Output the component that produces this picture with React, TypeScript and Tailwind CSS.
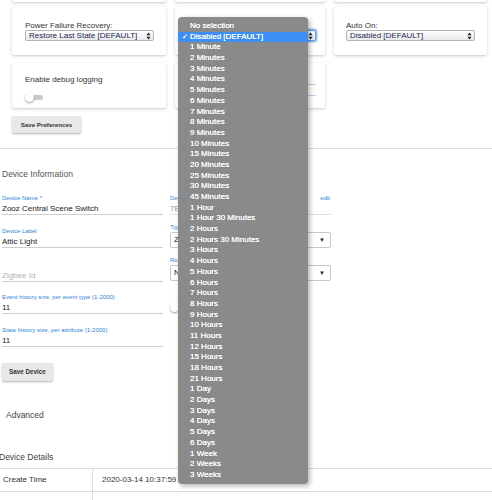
import React from 'react';

const options = [
  'No selection', 'Disabled [DEFAULT]', '1 Minute',
  '2 Minutes', '3 Minutes', '4 Minutes', '5 Minutes', '6 Minutes', '7 Minutes', '8 Minutes', '9 Minutes',
  '10 Minutes', '15 Minutes', '20 Minutes', '25 Minutes', '30 Minutes', '45 Minutes',
  '1 Hour', '1 Hour 30 Minutes', '2 Hours', '2 Hours 30 Minutes',
  '3 Hours', '4 Hours', '5 Hours', '6 Hours', '7 Hours', '8 Hours', '9 Hours', '10 Hours',
  '11 Hours', '12 Hours', '15 Hours', '18 Hours', '21 Hours',
  '1 Day', '2 Days', '3 Days', '4 Days', '5 Days', '6 Days',
  '1 Week', '2 Weeks', '3 Weeks',
];

const Card = ({ className = '', children }: { className?: string; children?: React.ReactNode }) => (
  <div className={`bg-white rounded-[2px] shadow-[0_1px_3px_rgba(0,0,0,0.22)] ${className}`}>{children}</div>
);

const UpDown = () => (
  <svg width="5" height="8" viewBox="0 0 5 8" className="shrink-0">
    <path d="M2.5 0.5 L4.6 3.2 H0.4 Z" fill="#222" />
    <path d="M2.5 7.5 L4.6 4.8 H0.4 Z" fill="#222" />
  </svg>
);

const MacSelect = ({ value, focused = false }: { value: string; focused?: boolean }) => (
  <div
    className={`flex items-center justify-between h-[11px] pl-[3px] pr-[2px] rounded-[2px] border bg-gradient-to-b from-white to-[#e9e9e9] ${
      focused ? 'border-[#5b9af0] shadow-[0_0_0_1.5px_rgba(80,150,240,0.6)]' : 'border-[#b4b4b4]'
    }`}
  >
    <span className="text-[8px] leading-[9px] text-[#1b2552] whitespace-nowrap">{value}</span>
    <UpDown />
  </div>
);

const Toggle = () => (
  <div className="relative w-[18px] h-[9px] flex items-center">
    <div className="w-full h-[5px] rounded-full bg-[#c9c9c9]" />
    <div className="absolute left-0 top-0 w-[9px] h-[9px] rounded-full bg-white shadow-[0_1px_2px_rgba(0,0,0,0.4)]" />
  </div>
);

const Field = ({ label, value, placeholder = false, className = '' }: { label?: string; value: string; placeholder?: boolean; className?: string }) => (
  <div className={className}>
    <div className="h-[7px] text-[6px] leading-[7px] text-[#2c84d8] whitespace-nowrap">{label}</div>
    <div
      className={`mt-[1px] h-[12px] text-[8px] leading-[11px] border-b border-[#cfcfcf] whitespace-nowrap ${
        placeholder ? 'text-[#b2b2b2]' : 'text-[#222]'
      }`}
    >
      {value}
    </div>
  </div>
);

const BoxSelect = ({ label, value }: { label: string; value: string }) => (
  <div>
    <div className="h-[7px] text-[6px] leading-[7px] text-[#2c84d8]">{label}</div>
    <div className="mt-[1px] h-[16px] flex items-center justify-between px-[3px] border border-[#c8c8c8] rounded-[2px] text-[8px] text-[#222]">
      <span>{value}</span>
      <span className="text-[6px] pr-[2px]">▼</span>
    </div>
  </div>
);

export default function App() {
  return (
    <div className="relative w-[492px] h-[500px] overflow-hidden bg-white font-['Liberation_Sans',Arial,sans-serif] text-[#333]">
      {/* preference cards */}
      <div className="grid grid-cols-[154px_150px_153px] gap-x-[9px] pl-[12px] -mt-[20px]">
        <Card className="h-[22px]" />
        <Card className="h-[22px]" />
        <Card className="h-[22px]" />
      </div>
      <div className="grid grid-cols-[154px_150px_153px] gap-x-[9px] pl-[12px] mt-[5px]">
        <Card className="h-[48px] pt-[14px] px-[13px] pr-[12px]">
          <div className="text-[8px] leading-[9px] text-[#333]">Power Failure Recovery:</div>
          <MacSelect value="Restore Last State [DEFAULT]" />
        </Card>
        <Card className="h-[48px] pt-[13px] pl-[13px] pr-[9px]">
          <div className="text-[8px] leading-[9px] text-[#333]">Auto Off:</div>
          <div className="mt-[1px]">
            <MacSelect value="Disabled [DEFAULT]" focused />
          </div>
        </Card>
        <Card className="h-[48px] pt-[14px] px-[12px]">
          <div className="text-[8px] leading-[9px] text-[#333]">Auto On:</div>
          <MacSelect value="Disabled [DEFAULT]" />
        </Card>
      </div>
      <div className="grid grid-cols-[154px_150px_153px] gap-x-[9px] pl-[12px] mt-[8px]">
        <Card className="h-[45px] pt-[12px] px-[13px]">
          <div className="text-[8px] leading-[10px] text-[#333]">Enable debug logging</div>
          <div className="mt-[8px]">
            <Toggle />
          </div>
        </Card>
        <Card className="h-[45px] pt-[21px] pl-[13px] pr-[9px]">
          <div className="h-[12px] border-y border-[#bcd6f3]" />
        </Card>
      </div>
      <div className="flex pl-[12px] mt-[8px]">
        <button className="h-[17px] w-[69px] bg-[#e8e8e8] rounded-[2px] shadow-[0_1px_2px_rgba(0,0,0,0.3)] text-[6.2px] font-bold text-[#333]">
          Save Preferences
        </button>
      </div>

      <div className="mt-[15px] border-t border-[#dcdcdc]" />

      {/* device information */}
      <div className="mt-[20px] pl-[2px] text-[8.5px] leading-[10px] text-[#555]">Device Information</div>
      <div className="mt-[16px] grid grid-cols-[163px_161px] gap-x-[7px]">
        <div className="flex flex-col">
          <Field label="Device Name *" value="Zooz Central Scene Switch" className="pl-[2px]" />
          <Field label="Device Label" value="Attic Light" className="pl-[2px] mt-[13px]" />
          <Field value="Zigbee Id" placeholder className="pl-[2px] mt-[14px]" />
          <Field label="Event history size, per event type (1-2000)" value="11" className="pl-[2px] mt-[12px]" />
          <Field label="State history size, per attribute (1-2000)" value="11" className="pl-[2px] mt-[13px]" />
        </div>
        <div className="flex flex-col">
          <div>
            <div className="flex justify-between h-[7px] text-[6px] leading-[7px]">
              <span className="text-[#2c84d8]">Device Network Id</span>
              <span className="text-[#2c84d8] pr-[1px]">edit</span>
            </div>
            <div className="mt-[1px] h-[12px] text-[8px] leading-[11px] border-b border-[#e0e0e0] text-[#9a9a9a]">7EB5</div>
          </div>
          <div className="mt-[9px]">
            <BoxSelect label="Type" value="Zooz Central Scene Switch" />
          </div>
          <div className="mt-[9px]">
            <BoxSelect label="Room" value="No Room" />
          </div>
          <div className="mt-[22px]">
            <Toggle />
          </div>
        </div>
      </div>

      <div className="flex mt-[16px] pl-[2px]">
        <button className="h-[18px] w-[51px] bg-[#e8e8e8] rounded-[2px] shadow-[0_1px_2px_rgba(0,0,0,0.3)] text-[6.3px] font-bold text-[#333]">
          Save Device
        </button>
      </div>

      <div className="mt-[29px] pl-[6px] text-[8.5px] leading-[10px] text-[#444]">Advanced</div>
      <div className="mt-[32px] -ml-[1px] text-[8.5px] leading-[10px] text-[#444]">Device Details</div>

      <div className="mt-[6px] border-t border-[#dcdcdc]">
        <div className="flex h-[23px] border-b border-[#dcdcdc] text-[8px] text-[#333]">
          <div className="w-[93px] border-r border-[#dcdcdc] pl-[3px] flex items-center">Create Time</div>
          <div className="pl-[9px] flex items-center">2020-03-14 10:37:59</div>
        </div>
        <div className="flex h-[23px] text-[8px] text-[#333]">
          <div className="w-[93px] border-r border-[#dcdcdc] pl-[3px] flex items-center">Last Update Time</div>
          <div className="pl-[9px] flex items-center">2021-04-19 17:29:45 CST</div>
        </div>
      </div>

      {/* open select menu */}
      <div className="absolute left-[178px] top-[17px] w-[130px] h-[467px] pt-[4px] rounded-[4px] bg-[#8a8a8a] shadow-[2px_2px_5px_rgba(0,0,0,0.3)]">
        {options.map((o, i) => (
          <div
            key={o}
            className={`relative h-[10.7px] leading-[10.7px] pl-[12px] text-[8px] text-white whitespace-nowrap [text-shadow:0_0_0.4px_#fff] ${
              i === 1 ? 'bg-[#3d8ff5]' : ''
            }`}
          >
            {i === 1 && <span className="absolute left-[4px] top-0 text-[7px]">✓</span>}
            {o}
          </div>
        ))}
      </div>
    </div>
  );
}
